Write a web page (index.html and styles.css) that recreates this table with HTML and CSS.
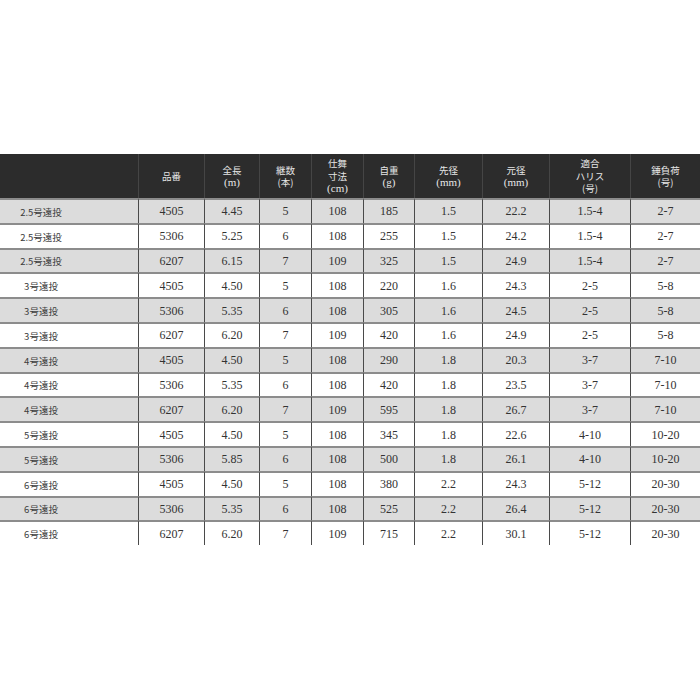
FILE: index.html
```html
<!DOCTYPE html>
<html lang="ja">
<head>
<meta charset="utf-8">
<link rel="stylesheet" href="styles.css">
</head>
<body>
<div class="spec">
  <div class="row head">
    <div class="c first"></div>
    <div class="c"><span>品番</span></div>
    <div class="c"><span>全長<br><span class="u">(m)</span></span></div>
    <div class="c"><span>継数<br>(本)</span></div>
    <div class="c"><span>仕舞<br>寸法<br><span class="u">(cm)</span></span></div>
    <div class="c"><span>自重<br><span class="u">(g)</span></span></div>
    <div class="c"><span>先径<br><span class="u">(mm)</span></span></div>
    <div class="c"><span>元径<br><span class="u">(mm)</span></span></div>
    <div class="c"><span>適合<br>ハリス<br>(号)</span></div>
    <div class="c"><span>錘負荷<br>(号)</span></div>
  </div>
  <div class="row odd"><div class="c first">2.5号遠投</div><div class="c">4505</div><div class="c">4.45</div><div class="c">5</div><div class="c">108</div><div class="c">185</div><div class="c">1.5</div><div class="c">22.2</div><div class="c">1.5-4</div><div class="c">2-7</div></div>
  <div class="row"><div class="c first">2.5号遠投</div><div class="c">5306</div><div class="c">5.25</div><div class="c">6</div><div class="c">108</div><div class="c">255</div><div class="c">1.5</div><div class="c">24.2</div><div class="c">1.5-4</div><div class="c">2-7</div></div>
  <div class="row odd"><div class="c first">2.5号遠投</div><div class="c">6207</div><div class="c">6.15</div><div class="c">7</div><div class="c">109</div><div class="c">325</div><div class="c">1.5</div><div class="c">24.9</div><div class="c">1.5-4</div><div class="c">2-7</div></div>
  <div class="row"><div class="c first">3号遠投</div><div class="c">4505</div><div class="c">4.50</div><div class="c">5</div><div class="c">108</div><div class="c">220</div><div class="c">1.6</div><div class="c">24.3</div><div class="c">2-5</div><div class="c">5-8</div></div>
  <div class="row odd"><div class="c first">3号遠投</div><div class="c">5306</div><div class="c">5.35</div><div class="c">6</div><div class="c">108</div><div class="c">305</div><div class="c">1.6</div><div class="c">24.5</div><div class="c">2-5</div><div class="c">5-8</div></div>
  <div class="row"><div class="c first">3号遠投</div><div class="c">6207</div><div class="c">6.20</div><div class="c">7</div><div class="c">109</div><div class="c">420</div><div class="c">1.6</div><div class="c">24.9</div><div class="c">2-5</div><div class="c">5-8</div></div>
  <div class="row odd"><div class="c first">4号遠投</div><div class="c">4505</div><div class="c">4.50</div><div class="c">5</div><div class="c">108</div><div class="c">290</div><div class="c">1.8</div><div class="c">20.3</div><div class="c">3-7</div><div class="c">7-10</div></div>
  <div class="row"><div class="c first">4号遠投</div><div class="c">5306</div><div class="c">5.35</div><div class="c">6</div><div class="c">108</div><div class="c">420</div><div class="c">1.8</div><div class="c">23.5</div><div class="c">3-7</div><div class="c">7-10</div></div>
  <div class="row odd"><div class="c first">4号遠投</div><div class="c">6207</div><div class="c">6.20</div><div class="c">7</div><div class="c">109</div><div class="c">595</div><div class="c">1.8</div><div class="c">26.7</div><div class="c">3-7</div><div class="c">7-10</div></div>
  <div class="row"><div class="c first">5号遠投</div><div class="c">4505</div><div class="c">4.50</div><div class="c">5</div><div class="c">108</div><div class="c">345</div><div class="c">1.8</div><div class="c">22.6</div><div class="c">4-10</div><div class="c">10-20</div></div>
  <div class="row odd"><div class="c first">5号遠投</div><div class="c">5306</div><div class="c">5.85</div><div class="c">6</div><div class="c">108</div><div class="c">500</div><div class="c">1.8</div><div class="c">26.1</div><div class="c">4-10</div><div class="c">10-20</div></div>
  <div class="row"><div class="c first">6号遠投</div><div class="c">4505</div><div class="c">4.50</div><div class="c">5</div><div class="c">108</div><div class="c">380</div><div class="c">2.2</div><div class="c">24.3</div><div class="c">5-12</div><div class="c">20-30</div></div>
  <div class="row odd"><div class="c first">6号遠投</div><div class="c">5306</div><div class="c">5.35</div><div class="c">6</div><div class="c">108</div><div class="c">525</div><div class="c">2.2</div><div class="c">26.4</div><div class="c">5-12</div><div class="c">20-30</div></div>
  <div class="row"><div class="c first">6号遠投</div><div class="c">6207</div><div class="c">6.20</div><div class="c">7</div><div class="c">109</div><div class="c">715</div><div class="c">2.2</div><div class="c">30.1</div><div class="c">5-12</div><div class="c">20-30</div></div>
</div>
</body>
</html>
```

FILE: styles.css
```css
html, body {
  margin: 0;
  padding: 0;
  background: #ffffff;
}

.spec {
  margin-top: 154px;
  width: 700px;
  display: grid;
  grid-template-columns: 138px 66px 55px 52px 52px 51px 68px 67px 81px 70px;
  grid-template-rows: 44px repeat(14, 24.8px);
}

.row {
  display: contents;
}

.c {
  box-sizing: border-box;
  display: flex;
  align-items: center;
  justify-content: center;
  text-align: center;
  border-left: 1.5px solid #4a4a4a;
  border-top: 2px solid #8c8c8c;
  font-family: "Liberation Serif", "Times New Roman", serif;
  font-size: 12px;
  color: #333333;
  background: #ffffff;
  padding-top: 1px;
}

.row.odd .c {
  background: #dcdcdc;
}

.c.first {
  border-left: none;
  font-family: "Noto Sans CJK JP", "Noto Sans", sans-serif;
  font-size: 9.5px;
  color: #3c3c3c;
  padding-right: 56px;
}

.head .c {
  background: #2c2c2c;
  border-top: none;
  border-left: 1px solid #454545;
  color: #e6e6e6;
  font-family: "Noto Sans CJK JP", "Noto Sans", sans-serif;
  font-size: 9.5px;
  line-height: 12.5px;
  padding-top: 0;
}

.head .c.first {
  border-left: none;
}

.head .u {
  font-family: "Liberation Serif", "Times New Roman", serif;
  font-size: 11px;
}
```
